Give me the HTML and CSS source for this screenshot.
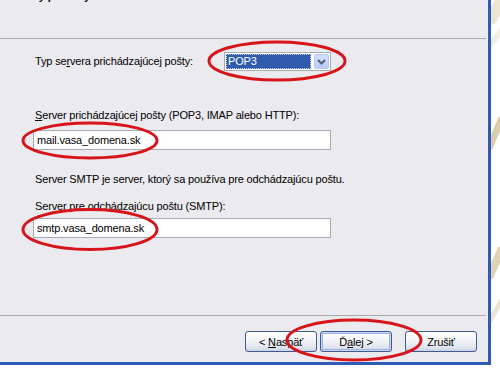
FILE: index.html
```html
<!DOCTYPE html>
<html lang="sk">
<head>
<meta charset="utf-8">
<title>Názvy poštových serverov</title>
<link rel="stylesheet" href="styles.css">
</head>
<body>
<div class="page">
  <div class="window">
    <div class="header"><div class="title">Názvy poštových serverov</div></div>
    <div class="sep"></div>
    <div class="content">
      <div class="row">
        <span class="label">Typ se<u>r</u>vera prichádzajúcej pošty:</span>
        <div class="combo">
          <span class="combo-value">POP3</span>
          <span class="combo-btn"><svg width="9" height="6" viewBox="0 0 9 6"><path d="M1 1 L4.5 4.5 L8 1" fill="none" stroke="#4D6185" stroke-width="2"/></svg></span>
        </div>
      </div>
      <div class="field-label l2"><u>S</u>erver prichádzajúcej pošty (POP3, IMAP alebo HTTP):</div>
      <div class="input i1">mail.vasa_domena.sk</div>
      <div class="field-label note">Server SMTP je server, ktorý sa používa pre odchádzajúcu poštu.</div>
      <div class="field-label l3">Server pre odchádzajúcu poštu (SMTP):</div>
      <div class="input i2">smtp.vasa_domena.sk</div>
    </div>
    <div class="sep"></div>
    <div class="buttons">
      <button class="btn back">&lt; <u>N</u>aspäť</button>
      <button class="btn next">Ď<u>a</u>lej &gt;</button>
      <button class="btn cancel">Zrušiť</button>
    </div>
  </div>
  <div class="desk">
    <svg width="9" height="376" viewBox="0 0 9 376">
      <path d="M-2 22 L11 0" stroke="#EDE5D2" stroke-width="12" fill="none"/>
      <path d="M-2 46 L11 30" stroke="#F3EEE3" stroke-width="6" fill="none"/>
      <path d="M-2 148 L11 118" stroke="#DCCDAA" stroke-width="7" fill="none"/>
      <path d="M-2 278 L11 248" stroke="#E0D3B4" stroke-width="8" fill="none"/>
      <path d="M-2 322 L11 300" stroke="#EDE5D3" stroke-width="5" fill="none"/>
    </svg>
  </div>
  <svg class="marks" width="500" height="376" viewBox="0 0 500 376">
    <ellipse cx="277" cy="61" rx="68" ry="19" />
    <ellipse cx="90" cy="140.5" rx="67" ry="17.5" />
    <ellipse cx="90" cy="229.5" rx="67" ry="20" />
    <ellipse cx="354" cy="340" rx="67" ry="20" />
  </svg>
</div>
</body>
</html>
```

FILE: styles.css
```css
* { box-sizing: border-box; }
html, body { margin: 0; padding: 0; }
body {
  background: #ffffff;
  font-family: "Liberation Sans", Arial, sans-serif;
  font-size: 11px;
  letter-spacing: -0.16px;
  color: #000;
  width: 500px;
  height: 376px;
  overflow: hidden;
}
.page {
  position: relative;
  display: flex;
  width: 500px;
  height: 376px;
}
.window {
  flex: none;
  width: 491px;
  height: 365px;
  background: #EBEAEE;
  border-right: 3px solid #2E5BB4;
  border-bottom: 3px solid #2E5BB4;
  display: flex;
  flex-direction: column;
}
.header {
  flex: none;
  height: 38px;
  padding-left: 13px;
  overflow: hidden;
}
.title {
  margin-top: -10px;
  font-weight: bold;
  line-height: 13px;
  letter-spacing: 0;
}
.sep {
  flex: none;
  height: 1px;
  background: #A8A7AC;
  margin-right: 2px;
}
.content {
  flex: 1;
  padding-left: 33px;
  display: flex;
  flex-direction: column;
  align-items: flex-start;
}
.row {
  margin-top: 13px;
  height: 19px;
  display: flex;
  align-items: center;
}
.label {
  width: 191px;
  padding-left: 2px;
  line-height: 13px;
}
.combo {
  width: 107px;
  height: 19px;
  border: 1px solid #A5ACB2;
  background: #fff;
  padding: 1px;
  display: flex;
  gap: 3px;
}
.combo-value {
  width: 85px;
  height: 15px;
  background: #2F5BAE;
  color: #fff;
  outline: 1px dotted #C8D0E0;
  outline-offset: -1px;
  padding-left: 2px;
  line-height: 15px;
}
.combo-btn {
  width: 15px;
  height: 15px;
  border: 1px solid #B6C7EE;
  border-radius: 2px;
  background: linear-gradient(#D3DFFC, #B9CCF7);
  display: flex;
  align-items: center;
  justify-content: center;
}
.field-label {
  padding-left: 2px;
  line-height: 13px;
}
.l2 { margin-top: 38px; }
.note { margin-top: 23px; }
.l3 { margin-top: 14px; }
.input {
  width: 298px;
  height: 20px;
  border: 1px solid #A5ACB2;
  background: #fff;
  padding: 0 3px;
  line-height: 18px;
}
.i1 { margin-top: 8px; }
.i2 { margin-top: 5px; }
.buttons {
  flex: none;
  height: 46px;
  padding: 15px 11px 0 0;
  display: flex;
  justify-content: flex-end;
  align-items: flex-start;
}
.btn {
  width: 72px;
  height: 21px;
  padding: 0;
  font-family: "Liberation Sans", Arial, sans-serif;
  font-size: 11px;
  letter-spacing: -0.16px;
  color: #000;
  border: 1px solid #405A8C;
  border-radius: 3px;
  background: linear-gradient(#FFFFFF, #F3F4F8 45%, #DDE2EE 85%, #C9D0E2);
}
.back { margin-right: 3px; }
.next {
  margin-right: 13px;
  box-shadow: inset 0 0 0 1px #C6D4F6, inset 0 0 0 2px #9DB3E6;
}
.desk {
  flex: 1;
  height: 376px;
  overflow: hidden;
}
.desk svg { display: block; }
.marks {
  position: absolute;
  left: 0;
  top: 0;
  pointer-events: none;
}
.marks ellipse {
  fill: none;
  stroke: #D8141B;
  stroke-width: 3;
}
```
